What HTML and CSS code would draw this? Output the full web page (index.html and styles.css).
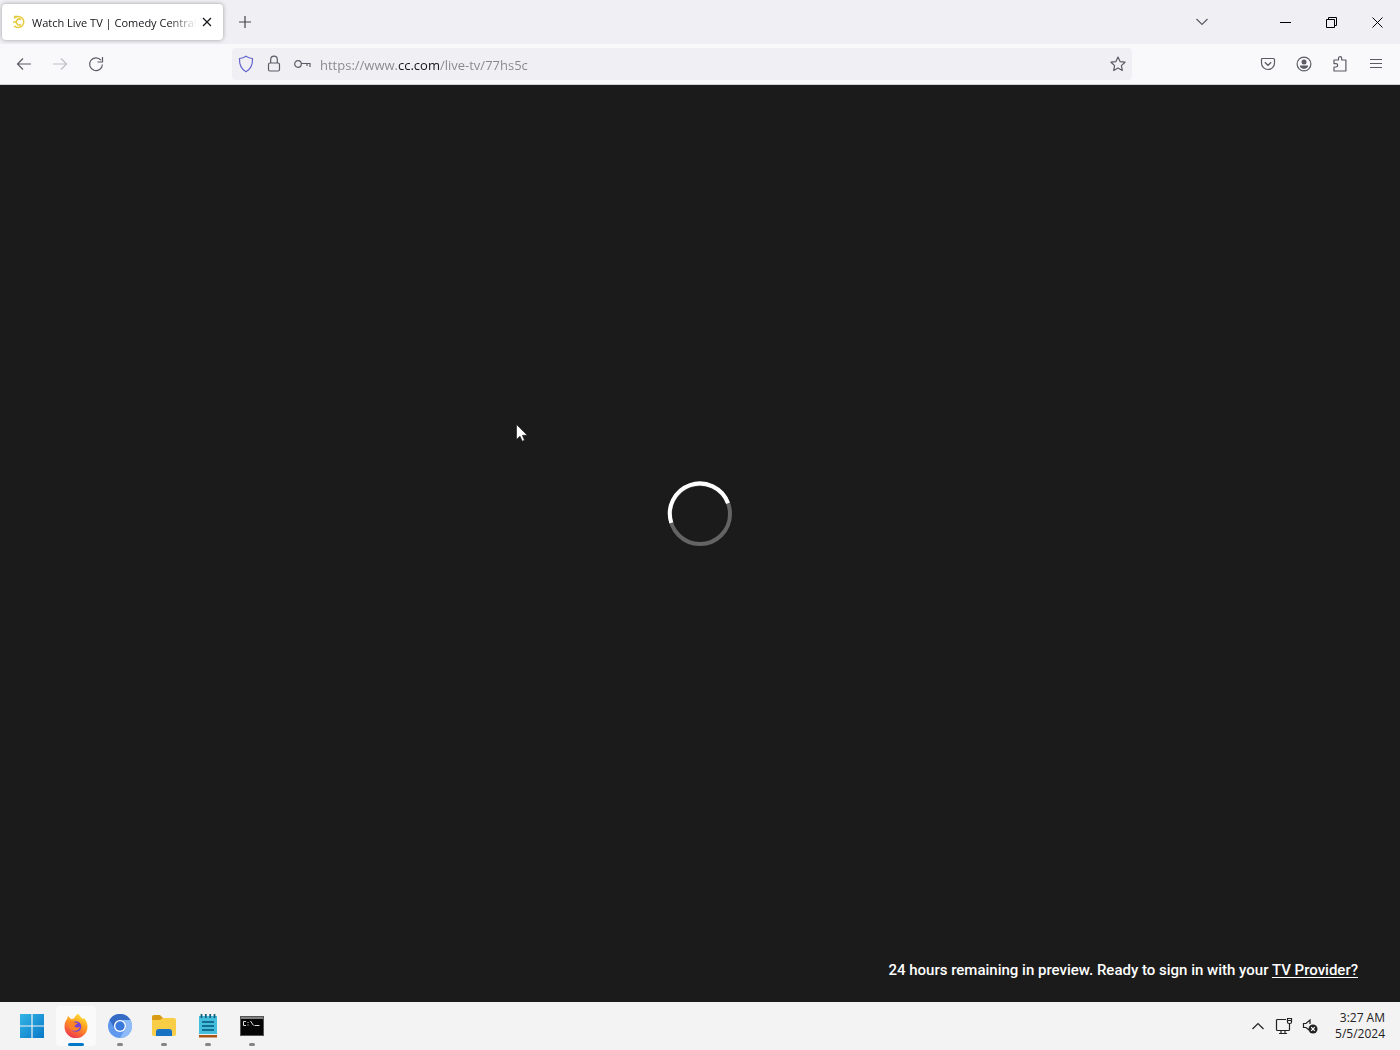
FILE: index.html
```html
<!DOCTYPE html>
<html lang="en">
<head>
<meta charset="utf-8">
<title>Watch Live TV | Comedy Central</title>
<link rel="stylesheet" href="styles.css">
</head>
<body>
<header class="browser">
  <div class="tabstrip">
    <div class="tab">
      <svg class="favicon" viewBox="0 0 14 14"><path d="M2 3.200A5.600 5.600 0 1 1 2 10.800M9 4.500A3 3 0 1 0 9 9.500M2 1.500h5M1 7h4"/></svg>
      <span class="tab-title">Watch Live TV | Comedy Central</span>
      <button class="tab-close" aria-label="Close tab"><svg width="10" height="10" viewBox="0 0 10 10"><path d="M1 1l8 8M9 1L1 9"/></svg></button>
    </div>
    <button class="new-tab" aria-label="New tab"><svg width="14" height="14" viewBox="0 0 14 14"><path d="M7 1v12M1 7h12"/></svg></button>
    <button class="list-tabs" aria-label="List all tabs"><svg width="14" height="8" viewBox="0 0 14 8"><path d="M1.500 1L7 6.500 12.500 1"/></svg></button>
    <div class="window-controls">
      <button aria-label="Minimize"><svg width="11" height="11" viewBox="0 0 11 11"><path d="M0 5.500h11"/></svg></button>
      <button aria-label="Restore"><svg width="11" height="11" viewBox="0 0 11 11"><path d="M.5 2.500h8v8h-8zM2.500 2.500v-2h8v8h-2"/></svg></button>
      <button aria-label="Close"><svg width="11" height="11" viewBox="0 0 11 11"><path d="M.5.5l10 10M10.500.5l-10 10"/></svg></button>
    </div>
  </div>
  <nav class="toolbar">
    <div class="group">
      <button aria-label="Back"><svg width="16" height="16" viewBox="0 0 16 16"><path d="M15 8H1.500M7 2.500L1.500 8 7 13.500"/></svg></button>
      <button disabled aria-label="Forward"><svg width="16" height="16" viewBox="0 0 16 16"><path d="M1 8h13.500M9 2.500L14.500 8 9 13.500"/></svg></button>
      <button aria-label="Reload"><svg width="16" height="16" viewBox="0 0 16 16"><path d="M13 4.200A6.400 6.400 0 1 0 14.400 8.500M14.500 1v5h-5"/></svg></button>
    </div>
    <div class="urlbar">
      <button class="shield" aria-label="Tracking protection"><svg width="16" height="18" viewBox="0 0 16 18"><path d="M8 1.200c2 1.400 4 2 6.500 2.300C14.800 10 13 14 8 16.700 3 14 1.200 10 1.500 3.500 4 3.200 6 2.600 8 1.200z"/></svg></button>
      <button aria-label="Site information"><svg width="14" height="18" viewBox="0 0 14 18"><rect x="1.500" y="8" width="11" height="8" rx="1.500"/><path d="M3.700 8V4.500a3.300 3.300 0 0 1 6.600 0V8"/></svg></button>
      <button aria-label="Saved login"><svg width="18" height="10" viewBox="0 0 18 10"><circle cx="5" cy="5" r="3.300"/><path d="M8.300 4.500H17v3.500M14 4.500v2.500"/></svg></button>
      <input class="address" type="text" aria-label="Address" value="https://www.cc.com/live-tv/77hs5c">
      <button aria-label="Bookmark this page"><svg width="16" height="16" viewBox="0 0 16 16"><path d="M8 1.100l2.100 4.500 4.900.6-3.600 3.400.9 4.900L8 12.100l-4.300 2.400.9-4.900L1 6.200l4.900-.6z" stroke-linejoin="round"/></svg></button>
    </div>
    <div class="group">
      <button aria-label="Save to Pocket"><svg width="16" height="14" viewBox="0 0 16 14"><path d="M2.500 1.500h11a1 1 0 0 1 1 1V6a6.500 6.500 0 0 1-13 0V2.500a1 1 0 0 1 1-1zM4.800 5.200L8 8.300l3.200-3.100"/></svg></button>
      <button aria-label="Account"><svg width="16" height="16" viewBox="0 0 16 16"><circle cx="8" cy="8" r="6.900"/><circle class="solid" cx="8" cy="5.900" r="2.500"/><path class="solid" d="M3.800 9.600h8.400C12 11.900 10.200 12.900 8 12.900s-4-1-4.200-3.300z"/></svg></button>
      <button aria-label="Extensions"><svg width="16" height="18" viewBox="0 0 16 18"><path d="M6.500 5V3.300a1.600 1.600 0 0 1 3.200 0V5h4.200v11H2v-4h2a1.700 1.700 0 0 0 0-3.400H2V5z" stroke-linejoin="round"/></svg></button>
      <button aria-label="Open application menu"><svg width="14" height="12" viewBox="0 0 14 12"><path d="M1 1.500h12M1 5.500h12M1 9.500h12"/></svg></button>
    </div>
  </nav>
</header>
<main class="page">
  <div class="player">
    <svg class="spinner" viewBox="0 0 66 66" role="img" aria-label="Loading"><circle cx="33" cy="33" r="30" stroke="#646464"/><path d="M4.300 41.800A30 30 0 0 1 61 22.200" stroke="#fff"/></svg>
  </div>
  <p class="preview">24 hours remaining in preview. Ready to sign in with your <a href="#">TV Provider?</a></p>
</main>
<footer class="taskbar">
  <div class="apps">
    <button aria-label="Start"><svg width="24" height="24" viewBox="0 0 24 24"><defs><linearGradient id="win" x2="1" y2="1"><stop stop-color="#35b5e5"/><stop offset="1" stop-color="#0878c8"/></linearGradient></defs><path fill="url(#win)" d="M0 0h11.400v11.400H0zM12.600 0H24v11.400H12.600zM0 12.600h11.400V24H0zM12.600 12.600H24V24H12.600z"/></svg></button>
    <button class="active" aria-label="Firefox"><svg width="24" height="24" viewBox="0 0 24 24"><defs><linearGradient id="fox" x1=".8" y1="0" x2=".3" y2="1"><stop stop-color="#ffe63d"/><stop offset=".45" stop-color="#ff9a20"/><stop offset="1" stop-color="#ef3150"/></linearGradient></defs><path fill="url(#fox)" d="M3 5l1-3 3 3 3-.5C12 1 13 0 15 0c0 2 2 3 4 5l1-1c2 2 3.500 5 3.500 8.500A11.500 11.500 0 0 1 .5 13C.5 9 1.500 7 3 5z"/><circle cx="12" cy="12.500" r="5.300" fill="#7542d8"/><path d="M4 8c3-2 5-1 7 .5l3 .5c-1 1.800-3 1.500-3.500 3 1 2 4 2 5.500.5-1 4-4 5-7 4S4.500 12 4 8z" fill="#ff8426"/></svg></button>
    <button class="open" aria-label="Chromium"><svg width="24" height="24" viewBox="0 0 24 24"><circle cx="12" cy="12" r="12" fill="#5f98ee"/><path d="M1.600 6A12 12 0 0 1 22.400 6H12a6 6 0 0 0-5.600 8z" fill="#356ac5"/><path d="M22.400 6A12 12 0 0 1 12 24l5.200-9A6 6 0 0 0 12 6z" fill="#8fbbf8"/><circle cx="12" cy="12" r="6" fill="#fff"/><circle cx="12" cy="12" r="4.700" fill="#3979dc"/></svg></button>
    <button class="open" aria-label="File Explorer"><svg width="26" height="24" viewBox="0 0 26 24"><path d="M1 3a2 2 0 0 1 2-2h6l3 3v5H1z" fill="#d99a16"/><path d="M1 6h8l3-2h11a2 2 0 0 1 2 2v14a2 2 0 0 1-2 2H3a2 2 0 0 1-2-2z" fill="#f9ce46"/><path d="M5 22v-4a3 3 0 0 1 3-3h10a3 3 0 0 1 3 3v4z" fill="#1673c4"/></svg></button>
    <button class="open" aria-label="Notepad"><svg width="20" height="26" viewBox="0 0 20 26"><path d="M1 3h18v20H1z" fill="#45bddc"/><path d="M1 22h18v2.500H1z" fill="#a75416"/><path d="M1 21.500h18" stroke="#eee"/><path d="M3.500 1v4M7.800 1v4M12.200 1v4M16.500 1v4" stroke="#17617f" stroke-width="1.800"/><path d="M4 9h12M4 13h12M4 17h12" stroke="#126e91" stroke-width="1.800"/></svg></button>
    <button class="open" aria-label="Command Prompt"><svg width="24" height="20" viewBox="0 0 24 20"><rect x=".5" y=".5" width="23" height="19" fill="#050505" stroke="#555"/><path d="M1 2h22" stroke="#aaa" stroke-width="1.500"/><path d="M6 5.500H3.500v4H6M8 6v1M8 8.500v1M10.500 5l3 4.500M14.500 9.500h5" fill="none" stroke="#ddd"/></svg></button>
  </div>
  <div class="tray">
    <button aria-label="Show hidden icons"><svg width="14" height="8" viewBox="0 0 14 8"><path d="M1.500 7L7 1.500 12.500 7"/></svg></button>
    <button aria-label="Network"><svg width="18" height="18" viewBox="0 0 18 18"><path d="M11 2.500H2.500a1 1 0 0 0-1 1v9a1 1 0 0 0 1 1h11a1 1 0 0 0 1-1V9M6 13.500v3M10 13.500v3M4 16.500h8M12.500 1.500h4V5a1.500 1.500 0 0 1-1.500 1.500h-1A1.500 1.500 0 0 1 12.500 5zM12.500 3.500h4M14.500 6.500V9"/></svg></button>
    <button aria-label="Volume muted"><svg width="16" height="16" viewBox="0 0 16 16"><path d="M7 12L4 9.500H1.500v-4H4L8 2v4"/><circle cx="11" cy="11" r="4.500" fill="#222" stroke="none"/><path d="M9.200 9.200l3.600 3.600M12.800 9.200l-3.600 3.600" stroke="#fff"/></svg></button>
    <div class="clock"><time>3:27 AM</time><time>5/5/2024</time></div>
  </div>
</footer>
<svg class="pointer" width="12" height="19" viewBox="0 0 12 19" aria-hidden="true"><path d="M.5.500v15l3.500-3.300 2.200 5 2.300-1-2.100-4.900h4.900z" fill="#fff" stroke="#111" stroke-width=".6"/></svg>
</body>
</html>
```
FILE: styles.css
```css
* { box-sizing: border-box; }
body {
  margin: 0;
  min-height: 100vh;
  display: flex;
  flex-direction: column;
  background: #1b1b1b;
  color: #15141a;
  font: 11px/16px "Open Sans", "Noto Sans", sans-serif;
}
button {
  display: flex;
  align-items: center;
  justify-content: center;
  padding: 0;
  border: 0;
  background: none;
  color: inherit;
}
svg { display: block; flex: none; }
.browser svg, .tray svg { fill: none; stroke: currentColor; stroke-width: 1.2; }
.browser { border-bottom: 1px solid #d0d0d3; background: #f9f9fb; }

/* Tab strip */
.tabstrip { display: flex; align-items: center; height: 44px; background: #f0f0f4; }
.tab {
  display: flex;
  align-items: center;
  gap: 6px;
  width: 221px;
  height: 36px;
  margin-left: 2px;
  padding: 0 6px 0 10px;
  border-radius: 4px;
  background: #fff;
  box-shadow: 0 0 4px rgba(0, 0, 0, .35);
}
.browser .favicon { width: 14px; height: 14px; stroke: #e8cb3c; stroke-width: 1.5; }
.tab-title {
  flex: 1;
  overflow: hidden;
  padding-top: 1px;
  white-space: nowrap;
  -webkit-mask-image: linear-gradient(to left, transparent, #000 28px);
  mask-image: linear-gradient(to left, transparent, #000 28px);
}
.tab-close { width: 20px; height: 24px; margin-left: -6px; }
.new-tab { width: 36px; height: 36px; margin-left: 4px; color: #45444d; }
.list-tabs { width: 36px; height: 36px; margin: 0 42px 0 auto; color: #5b5b66; }
.window-controls { display: flex; }
.window-controls button { width: 46px; height: 44px; color: #000; }
.window-controls svg { stroke-width: 1; }

/* Navigation toolbar */
.toolbar {
  display: flex;
  align-items: center;
  justify-content: space-between;
  height: 40px;
  padding: 0 6px;
  color: #5b5b66;
}
.group { display: flex; }
.group button { width: 36px; height: 32px; }
.group button:disabled { color: #bfbfc5; }
.browser .solid { fill: currentColor; stroke: none; }
.urlbar {
  display: flex;
  align-items: center;
  width: 65%;
  max-width: 900px;
  height: 32px;
  border-radius: 4px;
  background: #f0f0f4;
}
.urlbar button { width: 28px; height: 32px; }
.urlbar .shield { color: #6565cf; }
.address {
  flex: 1;
  min-width: 0;
  height: 26px;
  padding: 2px 0 0 4px;
  border: 0;
  outline: 0;
  /* The domain is darker than the rest of the address. */
  background: linear-gradient(to right, #85858c 82px, #15141a 82px 123px, #85858c 123px);
  -webkit-background-clip: text;
  background-clip: text;
  color: #85858c;
  -webkit-text-fill-color: transparent;
  font: 13px/24px "Open Sans", "Noto Sans", sans-serif;
}

/* Page content */
.page { flex: 1; display: flex; flex-direction: column; background: #1b1b1b; }
.player { flex: 1; display: grid; place-items: center; }
.spinner { width: 66px; height: 66px; fill: none; stroke-width: 4; }
.preview {
  margin: 0;
  padding: 16px 42px 20px;
  color: #fff;
  text-align: right;
  font: 500 15px/24px Roboto, sans-serif;
}
.preview a { color: inherit; text-underline-offset: 2px; }

/* Taskbar */
.taskbar {
  display: flex;
  align-items: center;
  justify-content: space-between;
  height: 48px;
  padding: 0 15px 0 12px;
  background: #f3f3f3;
}
.apps { display: flex; gap: 4px; }
.apps button { position: relative; width: 40px; height: 40px; border-radius: 4px; }
.apps .active { background: #fafafa; }
.apps .open::after, .apps .active::after {
  content: "";
  position: absolute;
  bottom: 0;
  width: 6px;
  height: 3px;
  border-radius: 2px;
  background: #858585;
}
.apps .active::after { width: 16px; background: #0078c8; }
.tray { display: flex; align-items: center; color: #222; }
.tray button { width: 26px; height: 40px; }
.clock { display: flex; flex-direction: column; margin-left: 12px; text-align: right; font-size: 12px; }

.pointer { position: absolute; left: 516px; top: 424px; }
```
